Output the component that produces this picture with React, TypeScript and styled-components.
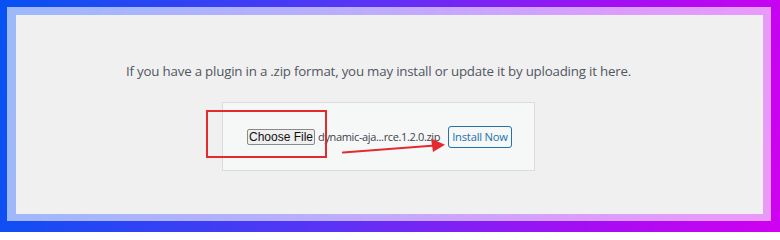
import styled, { createGlobalStyle } from "styled-components";

const GlobalStyle = createGlobalStyle`
  html, body {
    margin: 0;
    padding: 0;
  }
  body {
    width: 780px;
    height: 232px;
    overflow: hidden;
  }
`;

// gradient frame around the screenshot
const Frame = styled.div`
  box-sizing: border-box;
  width: 780px;
  height: 232px;
  padding: 7px 9px 11px 7px;
  background: linear-gradient(100deg, #0652f2 0%, #5a33f5 45%, #a20ef3 75%, #d000f0 100%);
`;

const Band = styled.div`
  box-sizing: border-box;
  height: 100%;
  padding: 8px 8px 7px 9px;
  background: rgba(255, 255, 255, 0.6);
`;

const Panel = styled.div`
  box-sizing: border-box;
  height: 100%;
  background: #f0f0f1;
  padding: 46px 22px 0 0;
  display: flex;
  flex-direction: column;
  align-items: center;
`;

const Intro = styled.p`
  margin: 0;
  font-family: "Open Sans", "Noto Sans", sans-serif;
  font-size: 13.3px;
  letter-spacing: -0.2px;
  line-height: 20px;
  color: #50575e;
  white-space: nowrap;
`;

const UploadBox = styled.form`
  position: relative;
  box-sizing: border-box;
  margin-top: 21px;
  width: 313px;
  height: 69px;
  padding: 0 22px 0 24px;
  background: #f6f7f7;
  border: 1px solid #dcdcde;
  display: flex;
  align-items: center;
`;

const FileButton = styled.button`
  box-sizing: border-box;
  flex-shrink: 0;
  height: 16px;
  width: 68px;
  padding: 0;
  font-family: "Liberation Sans", Arial, sans-serif;
  font-size: 12px;
  line-height: 14px;
  white-space: nowrap;
  color: #111;
  background: #efefef;
  border: 1px solid #8a8a8a;
  border-radius: 2px;
`;

const FileName = styled.span`
  margin-left: 3px;
  font-family: "Open Sans", "Noto Sans", sans-serif;
  font-size: 11px;
  letter-spacing: -0.35px;
  color: #3c434a;
  white-space: nowrap;
`;

const InstallButton = styled.button`
  box-sizing: border-box;
  flex-shrink: 0;
  margin-left: auto;
  height: 22px;
  width: 64px;
  padding: 0;
  font-family: "Open Sans", "Noto Sans", sans-serif;
  font-size: 11.2px;
  letter-spacing: -0.2px;
  white-space: nowrap;
  color: #2271b1;
  background: #f6f7f7;
  border: 1px solid #2271b1;
  border-radius: 3px;
`;

// red annotation marks drawn over the screenshot
const Highlight = styled.div`
  position: absolute;
  left: -17px;
  top: 7px;
  width: 121px;
  height: 48px;
  box-sizing: border-box;
  border: 2px solid #e52a2f;
  pointer-events: none;
`;

const ArrowLayer = styled.svg`
  position: absolute;
  left: 0;
  top: 0;
  overflow: visible;
  pointer-events: none;
`;

export default function App() {
  return (
    <>
      <GlobalStyle />
      <Frame>
        <Band>
          <Panel>
            <Intro>
              If you have a plugin in a .zip format, you may install or update it by uploading it here.
            </Intro>
            <UploadBox onSubmit={(e) => e.preventDefault()}>
              <FileButton type="button">Choose File</FileButton>
              <FileName>dynamic-aja...rce.1.2.0.zip</FileName>
              <InstallButton type="submit">Install Now</InstallButton>
              <Highlight />
              <ArrowLayer width="313" height="69" viewBox="0 0 313 69">
                <line x1="120" y1="49.5" x2="212" y2="42.5" stroke="#e52a2f" strokeWidth="2.2" strokeLinecap="round" />
                <polygon points="222,41.7 208,35.5 210,49" fill="#e52a2f" />
              </ArrowLayer>
            </UploadBox>
          </Panel>
        </Band>
      </Frame>
    </>
  );
}
